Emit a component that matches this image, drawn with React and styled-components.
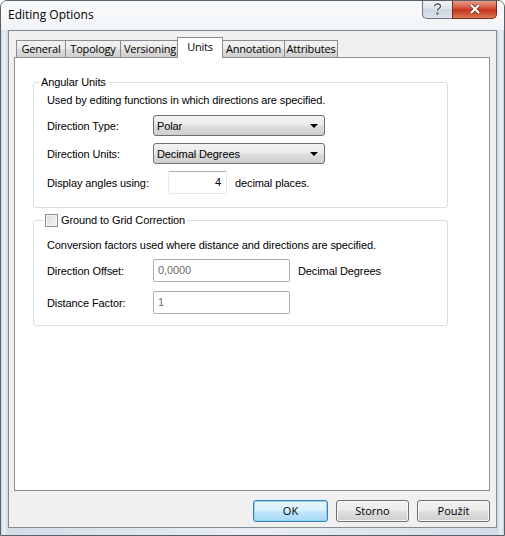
import React from 'react';
import styled, { createGlobalStyle, css } from 'styled-components';

const GlobalStyle = createGlobalStyle`
  html, body {
    margin: 0;
    padding: 0;
    background: #ffffff;
  }
  body {
    font-family: 'Liberation Sans', Arial, sans-serif;
    font-size: 11px;
    letter-spacing: -0.1px;
    color: #000;
  }
`;

const Window = styled.div`
  width: 505px;
  height: 536px;
  box-sizing: border-box;
  border: 1px solid #5a6068;
  border-radius: 7px 7px 0 0;
  background: linear-gradient(90deg, #c6d3e0 0px, #eef2f6 3px, #d3dde8 6px, #e9eef4 50%, #d3dde8 calc(100% - 6px), #eef2f6 calc(100% - 3px), #c6d3e0 100%);
  display: flex;
  flex-direction: column;
  overflow: hidden;
`;

const TitleBar = styled.div`
  height: 29px;
  flex: none;
  display: flex;
  align-items: flex-start;
  justify-content: space-between;
  background: linear-gradient(180deg, #fafbfc 0%, #f1f4f7 100%);
`;

const Title = styled.div`
  font-family: 'Open Sans', 'Liberation Sans', sans-serif;
  font-size: 12px;
  letter-spacing: 0;
  color: #000;
  padding: 5px 0 0 7px;
`;

const CaptionButtons = styled.div`
  display: flex;
  margin-right: 7px;
  margin-top: -1px;
`;

const CaptionButton = styled.div`
  height: 19px;
  width: ${p => (p.$close ? 45 : 30)}px;
  box-sizing: border-box;
  display: flex;
  align-items: center;
  justify-content: center;
  border: 1px solid #6d747e;
  border-top: none;
  ${p => p.$close
    ? css`
      border-radius: 0 0 5px 0;
      background: linear-gradient(180deg, #e8a493 0%, #d7543b 45%, #c6331b 55%, #d77a55 100%);
      border-color: #7a2a1c;
    `
    : css`
      border-radius: 0 0 0 5px;
      border-right: none;
      background: linear-gradient(180deg, #f2f4f7 0%, #dfe4ea 45%, #ccd4dd 55%, #dde3ea 100%);
    `}
`;

const Client = styled.div`
  flex: 1;
  margin: 0 7px 7px 7px;
  border: 1px solid #848a92;
  background: #f0f0f0;
  display: flex;
  flex-direction: column;
  padding: 7px 6px 0 5px;
`;

const TabStrip = styled.div`
  display: flex;
  align-items: flex-end;
  padding-left: 2px;
  height: 19px;
  flex: none;
  position: relative;
  z-index: 1;
`;

const Tab = styled.div`
  font-family: 'Open Sans', 'Liberation Sans', sans-serif;
  font-size: 11px;
  letter-spacing: -0.2px;
  width: ${p => p.$w}px;
  flex: none;
  box-sizing: border-box;
  border: 1px solid #898c95;
  border-bottom: none;
  margin-right: -1px;
  display: flex;
  align-items: center;
  justify-content: center;
  ${p => p.$active
    ? css`
      height: 21px;
      background: #ffffff;
      margin: 0 -1px -1px -2px;
      padding-bottom: 4px;
      position: relative;
    `
    : css`
      height: 17px;
      padding-bottom: 1px;
      background: linear-gradient(180deg, #f2f2f2 0%, #ebebeb 50%, #dddddd 50%, #cfcfcf 100%);
    `}
`;

const Panel = styled.div`
  height: 434px;
  flex: none;
  box-sizing: border-box;
  border: 1px solid #898c95;
  background: #ffffff;
  padding: 18px 41px 0 18px;
  display: flex;
  flex-direction: column;
  gap: 6px;
`;

const Group = styled.fieldset`
  margin: 0;
  border: 1px solid #d5dfe5;
  border-radius: 3px;
  padding: ${p => p.$top}px 13px ${p => p.$bottom}px 13px;
  display: flex;
  flex-direction: column;
`;

const Legend = styled.legend`
  padding: 0 2px;
  margin-left: ${p => p.$indent}px;
  font-size: 11px;
  line-height: 13px;
`;

const CheckBox = styled.span`
  display: inline-block;
  vertical-align: -3px;
  width: 13px;
  height: 13px;
  margin-right: 3px;
  box-sizing: border-box;
  border: 1px solid #8f8f8f;
  background: linear-gradient(135deg, #dcdcdc 0%, #f4f4f4 100%);
  box-shadow: inset 0 0 0 1px #f4f4f4;
`;

const Note = styled.div`
  line-height: 13px;
  margin-bottom: 7px;
`;

const Row = styled.div`
  display: flex;
  align-items: center;
  min-height: 23px;
  margin-top: ${p => p.$gap || 0}px;
`;

const Label = styled.div`
  width: ${p => p.$w || 106}px;
  flex: none;
`;

const Combo = styled.div`
  width: 172px;
  height: 21px;
  box-sizing: border-box;
  border: 1px solid #707070;
  border-radius: 3px;
  background: linear-gradient(180deg, #f2f2f2 0%, #ebebeb 45%, #dddddd 55%, #cfcfcf 100%);
  display: flex;
  align-items: center;
  justify-content: space-between;
  padding: 0 6px 0 3px;
`;

const Arrow = styled.span`
  width: 0;
  height: 0;
  border-left: 4px solid transparent;
  border-right: 4px solid transparent;
  border-top: 4px solid #000;
`;

const TextBox = styled.div`
  width: ${p => p.$w}px;
  height: 23px;
  box-sizing: border-box;
  border: 1px solid ${p => (p.$disabled ? '#adb2b5' : '#e3e9ef')};
  border-top-color: ${p => (p.$disabled ? '#a4a9ad' : '#abadb3')};
  border-radius: 2px;
  background: #ffffff;
  color: ${p => (p.$disabled ? '#6d6d6d' : '#000')};
  display: flex;
  align-items: center;
  justify-content: ${p => (p.$right ? 'flex-end' : 'flex-start')};
  padding: 0 5px 2px 4px;
`;

const After = styled.span`
  margin-left: 8px;
`;

const Footer = styled.div`
  flex: 1;
  display: flex;
  justify-content: flex-end;
  align-items: flex-start;
  gap: 8px;
  padding-top: 9px;
`;

const Button = styled.div`
  width: ${p => p.$w || 73}px;
  height: 22px;
  box-sizing: border-box;
  border: 1px solid ${p => (p.$default ? '#3c7fb1' : '#707070')};
  border-radius: 3px;
  display: flex;
  align-items: center;
  justify-content: center;
  font-family: 'Open Sans', 'Liberation Sans', sans-serif;
  font-size: 11px;
  letter-spacing: 0;
  padding-bottom: 1px;
  background: ${p => (p.$default
    ? 'linear-gradient(180deg, #eaf6fd 0%, #d9f0fc 45%, #bee6fd 55%, #a7d9f5 100%)'
    : 'linear-gradient(180deg, #f2f2f2 0%, #ebebeb 45%, #dddddd 55%, #cfcfcf 100%)')};
  box-shadow: inset 0 0 0 1px ${p => (p.$default ? '#8fd3f5' : '#f8f8f8')};
`;

const tabs = [
  ['General', 50],
  ['Topology', 56],
  ['Versioning', 60],
  ['Units', 46],
  ['Annotation', 63],
  ['Attributes', 54],
];

export default function App() {
  return (
    <>
      <GlobalStyle />
      <Window>
        <TitleBar>
          <Title>Editing Options</Title>
          <CaptionButtons>
            <CaptionButton>
              <svg width="9" height="12" viewBox="0 0 9 12">
                <path d="M1.5 3.5 C1.5 1.5 3 1 4.5 1 C6.5 1 7.5 2 7.5 3.5 C7.5 5 5 5.5 4.5 7 L4.5 8" fill="none" stroke="#fff" strokeWidth="3" />
                <path d="M1.5 3.5 C1.5 1.5 3 1 4.5 1 C6.5 1 7.5 2 7.5 3.5 C7.5 5 5 5.5 4.5 7 L4.5 8" fill="none" stroke="#4b535c" strokeWidth="1.3" />
                <rect x="3.5" y="9.5" width="2" height="2" fill="#4b535c" />
              </svg>
            </CaptionButton>
            <CaptionButton $close>
              <svg width="12" height="10" viewBox="0 0 12 10">
                <path d="M2 1 L10 9 M10 1 L2 9" stroke="#7a2a1c" strokeWidth="3.6" />
                <path d="M2 1 L10 9 M10 1 L2 9" stroke="#ffffff" strokeWidth="2.2" />
              </svg>
            </CaptionButton>
          </CaptionButtons>
        </TitleBar>
        <Client>
          <TabStrip>
            {tabs.map(([t, w]) => (
              <Tab key={t} $w={w} $active={t === 'Units'}>{t}</Tab>
            ))}
          </TabStrip>
          <Panel>
            <Group $top={5} $bottom={13}>
              <Legend $indent={-8}>Angular Units</Legend>
              <Note>Used by editing functions in which directions are specified.</Note>
              <Row>
                <Label>Direction Type:</Label>
                <Combo>Polar<Arrow /></Combo>
              </Row>
              <Row $gap={5}>
                <Label>Direction Units:</Label>
                <Combo>Decimal Degrees<Arrow /></Combo>
              </Row>
              <Row $gap={6}>
                <Label $w={121}>Display angles using:</Label>
                <TextBox $w={59} $right>4</TextBox>
                <After>decimal places.</After>
              </Row>
            </Group>
            <Group $top={12} $bottom={11}>
              <Legend $indent={-4}><CheckBox />Ground to Grid Correction</Legend>
              <Note>Conversion factors used where distance and directions are specified.</Note>
              <Row>
                <Label>Direction Offset:</Label>
                <TextBox $w={137} $disabled>0,0000</TextBox>
                <After>Decimal Degrees</After>
              </Row>
              <Row $gap={9}>
                <Label>Distance Factor:</Label>
                <TextBox $w={137} $disabled>1</TextBox>
              </Row>
            </Group>
          </Panel>
          <Footer>
            <Button $default $w={75}>OK</Button>
            <Button>Storno</Button>
            <Button>Použít</Button>
          </Footer>
        </Client>
      </Window>
    </>
  );
}
